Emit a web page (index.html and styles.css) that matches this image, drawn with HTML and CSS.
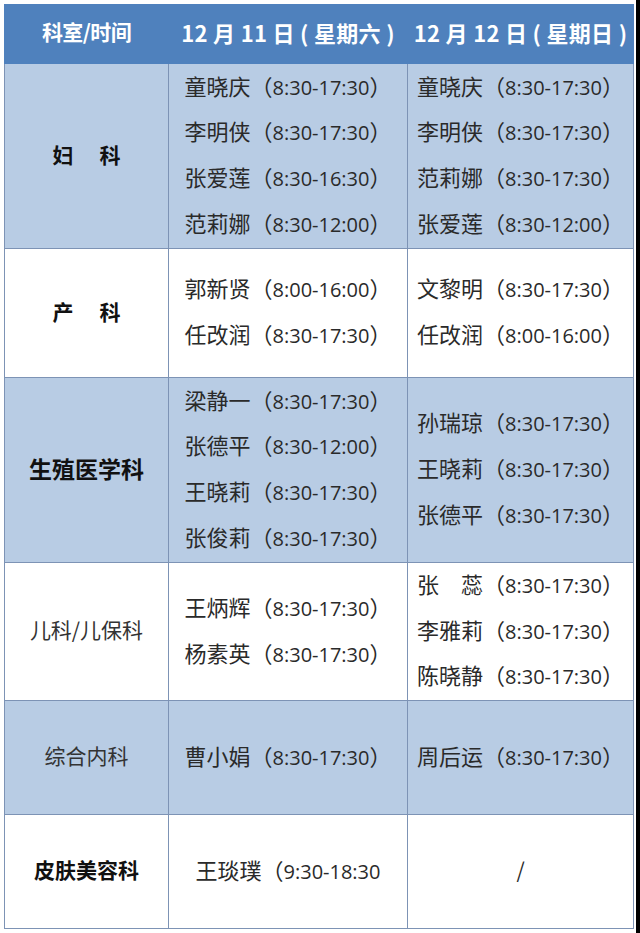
FILE: index.html
```html
<!DOCTYPE html>
<html lang="zh-CN">
<head>
<meta charset="utf-8">
<title>排班表</title>
<link rel="stylesheet" href="styles.css">
</head>
<body>
<table class="sched">
  <colgroup>
    <col class="c1"><col class="c2"><col class="c3">
  </colgroup>
  <thead>
    <tr class="head">
      <th>科室/时间</th>
      <th class="date">12 月 11 日 ( 星期六 )</th>
      <th class="date">12 月 12 日 ( 星期日 )</th>
    </tr>
  </thead>
  <tbody>
    <tr class="alt r1">
      <td class="dept serif">妇<span class="gap"></span>科</td>
      <td class="names"><div>童晓庆（<span class="num">8:30-17:30</span>）</div><div>李明侠（<span class="num">8:30-17:30</span>）</div><div>张爱莲（<span class="num">8:30-16:30</span>）</div><div>范莉娜（<span class="num">8:30-12:00</span>）</div></td>
      <td class="names"><div>童晓庆（<span class="num">8:30-17:30</span>）</div><div>李明侠（<span class="num">8:30-17:30</span>）</div><div>范莉娜（<span class="num">8:30-17:30</span>）</div><div>张爱莲（<span class="num">8:30-12:00</span>）</div></td>
    </tr>
    <tr class="r2">
      <td class="dept serif">产<span class="gap"></span>科</td>
      <td class="names"><div>郭新贤（<span class="num">8:00-16:00</span>）</div><div>任改润（<span class="num">8:30-17:30</span>）</div></td>
      <td class="names"><div>文黎明（<span class="num">8:30-17:30</span>）</div><div>任改润（<span class="num">8:00-16:00</span>）</div></td>
    </tr>
    <tr class="alt r3">
      <td class="dept serif big">生殖医学科</td>
      <td class="names"><div>梁静一（<span class="num">8:30-17:30</span>）</div><div>张德平（<span class="num">8:30-12:00</span>）</div><div>王晓莉（<span class="num">8:30-17:30</span>）</div><div>张俊莉（<span class="num">8:30-17:30</span>）</div></td>
      <td class="names"><div>孙瑞琼（<span class="num">8:30-17:30</span>）</div><div>王晓莉（<span class="num">8:30-17:30</span>）</div><div>张德平（<span class="num">8:30-17:30</span>）</div></td>
    </tr>
    <tr class="r4">
      <td class="dept sans">儿科/儿保科</td>
      <td class="names"><div>王炳辉（<span class="num">8:30-17:30</span>）</div><div>杨素英（<span class="num">8:30-17:30</span>）</div></td>
      <td class="names"><div>张<span class="gap2"></span>蕊（<span class="num">8:30-17:30</span>）</div><div>李雅莉（<span class="num">8:30-17:30</span>）</div><div>陈晓静（<span class="num">8:30-17:30</span>）</div></td>
    </tr>
    <tr class="alt r5">
      <td class="dept sans">综合内科</td>
      <td class="names"><div>曹小娟（<span class="num">8:30-17:30</span>）</div></td>
      <td class="names"><div>周后运（<span class="num">8:30-17:30</span>）</div></td>
    </tr>
    <tr class="r6">
      <td class="dept serif">皮肤美容科</td>
      <td class="names"><div>王琰璞（<span class="num">9:30-18:30</span></div></td>
      <td class="names"><div class="slash">/</div></td>
    </tr>
  </tbody>
</table>
</body>
</html>
```

FILE: styles.css
```css
html {
  background: linear-gradient(to right, #ffffff 636px, #000000 636px);
  min-height: 100%;
}
body {
  margin: 0;
  padding: 4px 0 0 4px;
  font-family: "Noto Sans CJK SC", "Noto Sans", sans-serif;
}
.sched {
  width: 629px;
  border-collapse: collapse;
  table-layout: fixed;
  background: #ffffff;
}
.c1 { width: 164px; }
.c2 { width: 239px; }
.c3 { width: 226px; }

.head th {
  height: 53px;
  padding: 0 0 5px 0;
  background: #4f81bd;
  color: #ffffff;
  font-weight: 700;
  font-size: 21px;
  line-height: 1;
  text-align: center;
  border: 1px solid #4f81bd;
  white-space: nowrap;
  letter-spacing: -0.6px;
}
.head th.date {
  font-size: 22px;
  letter-spacing: 0.3px;
}
.sched td {
  padding: 0;
  border: 1px solid #7d93b5;
  text-align: center;
  vertical-align: middle;
  color: #2a2a2a;
}
.alt td { background: #b8cce4; }
.r1 .names { height: 184px; }
.r2 .names { height: 128px; }
.r3 .names { height: 184px; }
.r4 .names { height: 137px; }
.r5 .names { height: 113px; }
.r6 .names { height: 113px; }

.dept {
  font-size: 21px;
  line-height: 1;
  padding-bottom: 4px !important;
}
.dept.serif { font-weight: 700; color: #111111; font-size: 21px; }
.dept.big { font-size: 23px; }
.dept.sans { font-weight: 400; color: #333333; }
.gap { display: inline-block; width: 26px; }
.gap2 { display: inline-block; width: 22px; }

.names {
  font-size: 22px;
  line-height: 45.7px;
  white-space: nowrap;
}
.names div { height: 45.7px; }
.names div:first-child { margin-top: -4px; }
.num {
  font-family: "Open Sans", "Noto Sans", sans-serif;
  font-size: 20px;
  line-height: 1;
  letter-spacing: 0;
}
.slash { font-size: 21px; }
```
